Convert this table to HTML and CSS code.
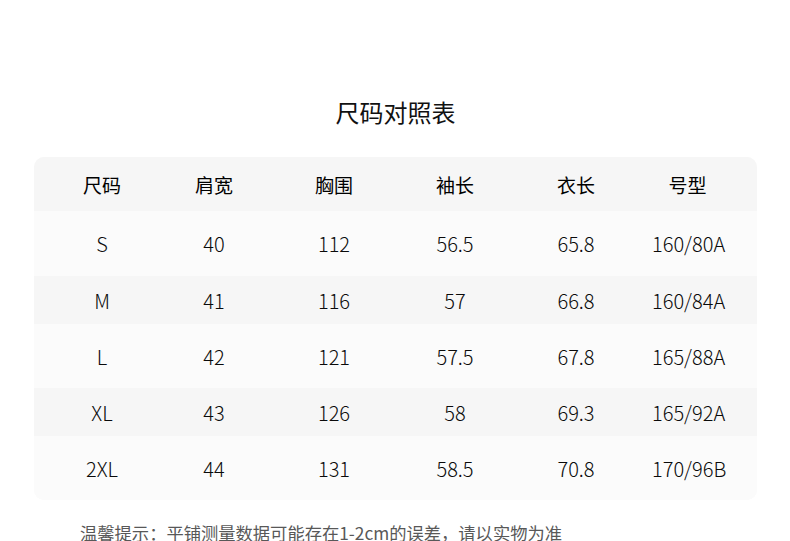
FILE: index.html
```html
<!DOCTYPE html>
<html lang="zh-CN">
<head>
<meta charset="utf-8">
<title>尺码对照表</title>
<link rel="stylesheet" href="styles.css">
</head>
<body>
<main class="page">
  <h1 class="title">尺码对照表</h1>
  <div class="card">
    <div class="row head">
      <span>尺码</span><span>肩宽</span><span>胸围</span><span>袖长</span><span>衣长</span><span>号型</span>
    </div>
    <div class="row tall light">
      <span>S</span><span>40</span><span>112</span><span>56.5</span><span>65.8</span><span>160/80A</span>
    </div>
    <div class="row short grey">
      <span>M</span><span>41</span><span>116</span><span>57</span><span>66.8</span><span>160/84A</span>
    </div>
    <div class="row mid light">
      <span>L</span><span>42</span><span>121</span><span>57.5</span><span>67.8</span><span>165/88A</span>
    </div>
    <div class="row short grey">
      <span>XL</span><span>43</span><span>126</span><span>58</span><span>69.3</span><span>165/92A</span>
    </div>
    <div class="row mid light">
      <span>2XL</span><span>44</span><span>131</span><span>58.5</span><span>70.8</span><span>170/96B</span>
    </div>
  </div>
  <p class="note">温馨提示：平铺测量数据可能存在1-2cm的误差，请以实物为准</p>
</main>
</body>
</html>
```
FILE: styles.css
```css
html, body {
  margin: 0;
  padding: 0;
  background: #ffffff;
}

body {
  font-family: "Noto Sans CJK SC", "Noto Sans", sans-serif;
  color: #1a1a1a;
}

.page {
  padding: 96px 33px 0 34px;
}

.title {
  margin: 0;
  height: 32px;
  line-height: 32px;
  font-size: 24px;
  font-weight: 400;
  text-align: center;
  color: #111111;
}

.card {
  margin-top: 29px;
  width: 723px;
  border-radius: 10px;
  overflow: hidden;
  background: #fbfbfb;
}

.row {
  display: grid;
  grid-template-columns: 136px 88px 152px 90px 152px 71px;
  align-items: center;
  font-size: 20px;
  font-weight: 300;
  color: #0a0a0a;
}

.row span {
  text-align: center;
  white-space: nowrap;
}

.head {
  height: 54px;
  background: #f6f6f6;
  font-size: 19px;
  font-weight: 400;
  color: #000000;
}

.tall { height: 65px; }
.mid { height: 64px; }
.short { height: 48px; }

.light { background: #fbfbfb; }
.grey { background: #f6f6f6; }

.note {
  margin: 21px 0 0 46px;
  font-size: 17.3px;
  line-height: 24px;
  white-space: nowrap;
  color: #585858;
}
```
